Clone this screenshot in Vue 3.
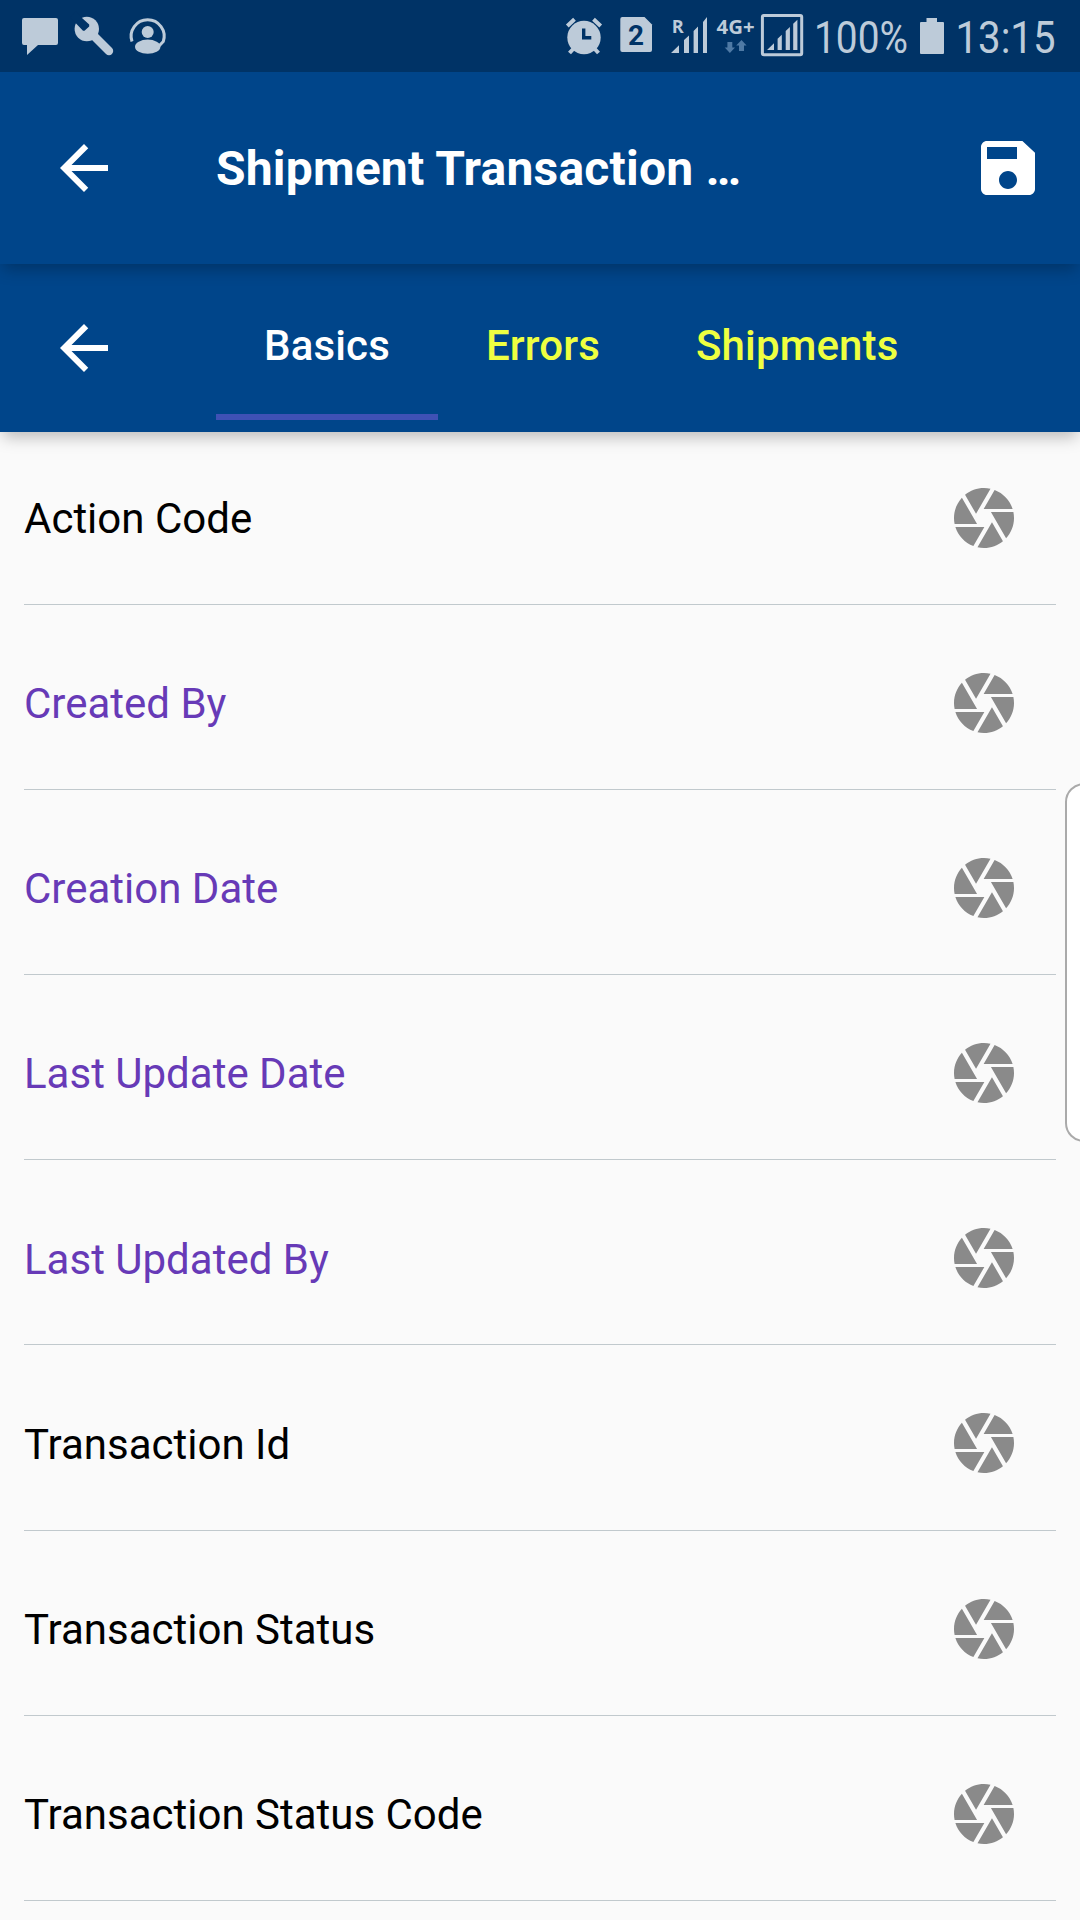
<script setup>
const tabs = [
  { label: 'Basics', active: true },
  { label: 'Errors', active: false },
  { label: 'Shipments', active: false },
]
const fields = [
  { label: 'Action Code', accent: false },
  { label: 'Created By', accent: true },
  { label: 'Creation Date', accent: true },
  { label: 'Last Update Date', accent: true },
  { label: 'Last Updated By', accent: true },
  { label: 'Transaction Id', accent: false },
  { label: 'Transaction Status', accent: false },
  { label: 'Transaction Status Code', accent: false },
]
</script>

<template>
  <div class="screen">
    <div class="status">
      <div class="cluster">
        <svg width="48" height="72" viewBox="16 0 48 72">
          <path d="M24 18H56Q58 18 58 20V43Q58 45 56 45H38L27 55V45H24Q22 45 22 43V20Q22 18 24 18Z" />
        </svg>
        <svg width="56" height="72" viewBox="64 0 56 72">
          <circle cx="86.8" cy="29" r="12.2" />
          <path class="line" d="M91 33L109 51" stroke-width="8.4" stroke-linecap="round" />
          <path class="dark" d="M70 17.5L76.3 23.8L83 30.7H84.5L89.2 26.6V24.6L82 18L76 11Z" />
        </svg>
        <svg width="56" height="72" viewBox="120 0 56 72">
          <path class="line" d="M132 41.5A16.5 16.5 0 1 1 163.3 41.5L159 46" stroke-width="3" />
          <circle cx="147.7" cy="32" r="6" />
          <ellipse cx="147.7" cy="46.7" rx="12.7" ry="7.1" />
        </svg>
      </div>
      <div class="cluster">
        <svg width="52" height="72" viewBox="560 0 52 72">
          <circle cx="584" cy="37.5" r="16.7" />
          <path class="line" d="M567.3 26L574.5 19.3M593.5 19.3L600.7 26" stroke-width="4" />
          <path class="line" d="M569.5 53L575 47M598.5 53L593 47" stroke-width="4" />
          <path class="cut" d="M583.7 28.5V37.7H591.3" />
        </svg>
        <svg width="48" height="72" viewBox="612 0 48 72">
          <path d="M622.3 17H644.5L652 24.5V50Q652 52 650 52H622.3Q620.3 52 620.3 50V19Q620.3 17 622.3 17Z" />
          <text class="dark bold" x="628" y="45.3" font-size="27" textLength="16" lengthAdjust="spacingAndGlyphs">2</text>
        </svg>
        <svg width="50" height="72" viewBox="660 0 50 72">
          <text class="sans" x="671.7" y="32.5" font-size="17.5" textLength="12" lengthAdjust="spacingAndGlyphs">R</text>
          <path d="M671 53L679 45.3V53ZM684 53V40L689 35.5V53ZM693.6 53V31L698 26.5V53ZM703 53V22L707 17V53Z" />
        </svg>
        <svg width="48" height="72" viewBox="710 0 48 72">
          <text class="sans" x="716.6" y="34" font-size="19.5" textLength="38" lengthAdjust="spacingAndGlyphs">4G+</text>
          <path class="faint" d="M727.4 42H732.3V47.5H735L729.9 53L724.7 47.5H727.4ZM739 51V45.5H736.2L741.5 40L746.6 45.5H744V51Z" />
        </svg>
        <svg width="50" height="72" viewBox="758 0 50 72">
          <rect class="line" x="762.4" y="15.4" width="39.3" height="39.3" rx="1.5" stroke-width="3" />
          <path d="M767 50L774 43.3V50ZM777.6 50V38.7L781.8 34.8V50ZM785.7 50V31L789.9 27V50ZM793.2 50V23.7L797.4 19.7V50Z" />
        </svg>
        <svg width="106" height="72" viewBox="808 0 106 72">
          <text x="814" y="52.9" font-size="45" textLength="94" lengthAdjust="spacingAndGlyphs">100%</text>
        </svg>
        <svg width="36" height="72" viewBox="914 0 36 72">
          <path d="M926.5 18H937V22H943Q944 22 944 23V53Q944 54 943 54H921Q920 54 920 53V23Q920 22 921 22H926.5Z" />
        </svg>
        <svg width="130" height="72" viewBox="950 0 130 72">
          <text x="955.5" y="52.9" font-size="45" textLength="100" lengthAdjust="spacingAndGlyphs">13:15</text>
        </svg>
      </div>
    </div>

    <header class="appbar">
      <svg class="icon" viewBox="0 0 24 24"><path d="M20 11H7.83l5.59-5.59L12 4l-8 8 8 8 1.41-1.41L7.83 13H20v-2z" /></svg>
      <h1>Shipment Transaction …</h1>
      <svg class="icon" viewBox="0 0 24 24"><path d="M16.8 3H5c-1.11 0-2 .9-2 2v14c0 1.1.89 2 2 2h14c1.1 0 2-.9 2-2V6.9L16.8 3zM12 19c-1.66 0-3-1.34-3-3s1.34-3 3-3 3 1.34 3 3-1.34 3-3 3zm3-10H5V5h10v4z" /></svg>
    </header>

    <nav class="tabbar">
      <svg class="icon" viewBox="0 0 24 24"><path d="M20 11H7.83l5.59-5.59L12 4l-8 8 8 8 1.41-1.41L7.83 13H20v-2z" /></svg>
      <div class="tabs">
        <div v-for="t in tabs" :key="t.label" class="tab" :class="{ active: t.active }">{{ t.label }}</div>
      </div>
    </nav>

    <main class="list">
      <div v-for="f in fields" :key="f.label" class="row">
        <span :class="{ accent: f.accent }">{{ f.label }}</span>
        <svg class="shutter" viewBox="0 0 24 24"><path d="M9.4 10.5l4.77-8.26C13.47 2.09 12.75 2 12 2c-2.4 0-4.6.85-6.32 2.25l3.66 6.35.06-.1zM21.54 9c-.92-2.92-3.15-5.26-6-6.34L11.88 9h9.66zm.26 1h-7.49l.29.5 4.76 8.25C21 16.97 22 14.61 22 12c0-.69-.07-1.35-.2-2zM8.54 12l-3.9-6.75C3.01 7.03 2 9.39 2 12c0 .69.07 1.35.2 2h7.49l-1.15-2zm-6.08 3c.92 2.92 3.15 5.26 6 6.34L12.12 15H2.46zm11.27 0l-3.9 6.76c.7.15 1.42.24 2.17.24 2.4 0 4.6-.85 6.32-2.25l-3.66-6.35-.93 1.6z" /></svg>
      </div>
    </main>

    <div class="edge-handle"></div>
  </div>
</template>

<style>
body {
  margin: 0;
  background: #fafafa;
}
</style>

<style scoped>
.screen {
  position: relative;
  width: 1080px;
  height: 1920px;
  overflow: hidden;
  background: #fafafa;
  font-family: Roboto, sans-serif;
}
.status {
  position: relative;
  z-index: 3;
  display: flex;
  justify-content: space-between;
  height: 72px;
  padding-left: 16px;
  background: #003366;
}
.cluster {
  display: flex;
}
.status svg {
  display: block;
  overflow: visible;
  fill: #bdcbd9;
}
.status .line {
  fill: none;
  stroke: #bdcbd9;
}
.status .cut {
  fill: none;
  stroke: #003366;
  stroke-width: 3.4;
}
.status .dark {
  fill: #003366;
}
.status .bold {
  font-weight: 700;
}
.status .faint {
  fill: #4f7aa5;
}
.status .sans {
  font-family: "Open Sans", sans-serif;
  font-weight: 700;
}
.appbar,
.tabbar {
  position: relative;
  display: flex;
  align-items: center;
  box-sizing: border-box;
  background: #00458a;
  box-shadow: 0 8px 15px -3px rgba(0, 0, 0, 0.26);
}
.appbar {
  z-index: 2;
  height: 192px;
  padding: 0 36px 0 48px;
}
.tabbar {
  z-index: 1;
  height: 168px;
  padding-left: 48px;
}
.icon {
  flex: none;
  width: 72px;
  height: 72px;
  fill: #fff;
}
h1 {
  flex: 1;
  margin: 2px 0 0 96px;
  color: #fff;
  font-size: 48px;
  font-weight: 700;
  letter-spacing: 0.2px;
  line-height: 56px;
}
.tabs {
  display: flex;
  align-self: flex-start;
  height: 156px;
  margin-left: 96px;
}
.tab {
  box-sizing: border-box;
  padding: 0 48px;
  border-bottom: 6px solid transparent;
  color: #eeff41;
  font-size: 42px;
  font-weight: 500;
  letter-spacing: 0.15px;
  line-height: 164px;
}
.tab.active {
  color: #fff;
  border-bottom-color: #3f51b5;
}
.list {
  margin-top: -12.3px;
  padding: 0 24px;
}
.row {
  display: flex;
  align-items: center;
  justify-content: space-between;
  box-sizing: border-box;
  height: 185.15px;
  padding: 12px 36px 0 0;
  color: #000;
  font-size: 42px;
  box-shadow: inset 0 -1px #c1c9cd;
}
.row span {
  padding-top: 0.6px;
}
.accent {
  color: #673ab7;
}
.shutter {
  width: 72px;
  height: 72px;
  margin-bottom: 1px;
  fill: #8a8a8a;
}
/* System edge panel handle, partly off the right side */
.edge-handle {
  position: absolute;
  top: 783px;
  right: -24px;
  box-sizing: border-box;
  width: 39px;
  height: 359px;
  border: 2px solid #aaa;
  border-radius: 19px;
  background: #fff;
}
</style>
